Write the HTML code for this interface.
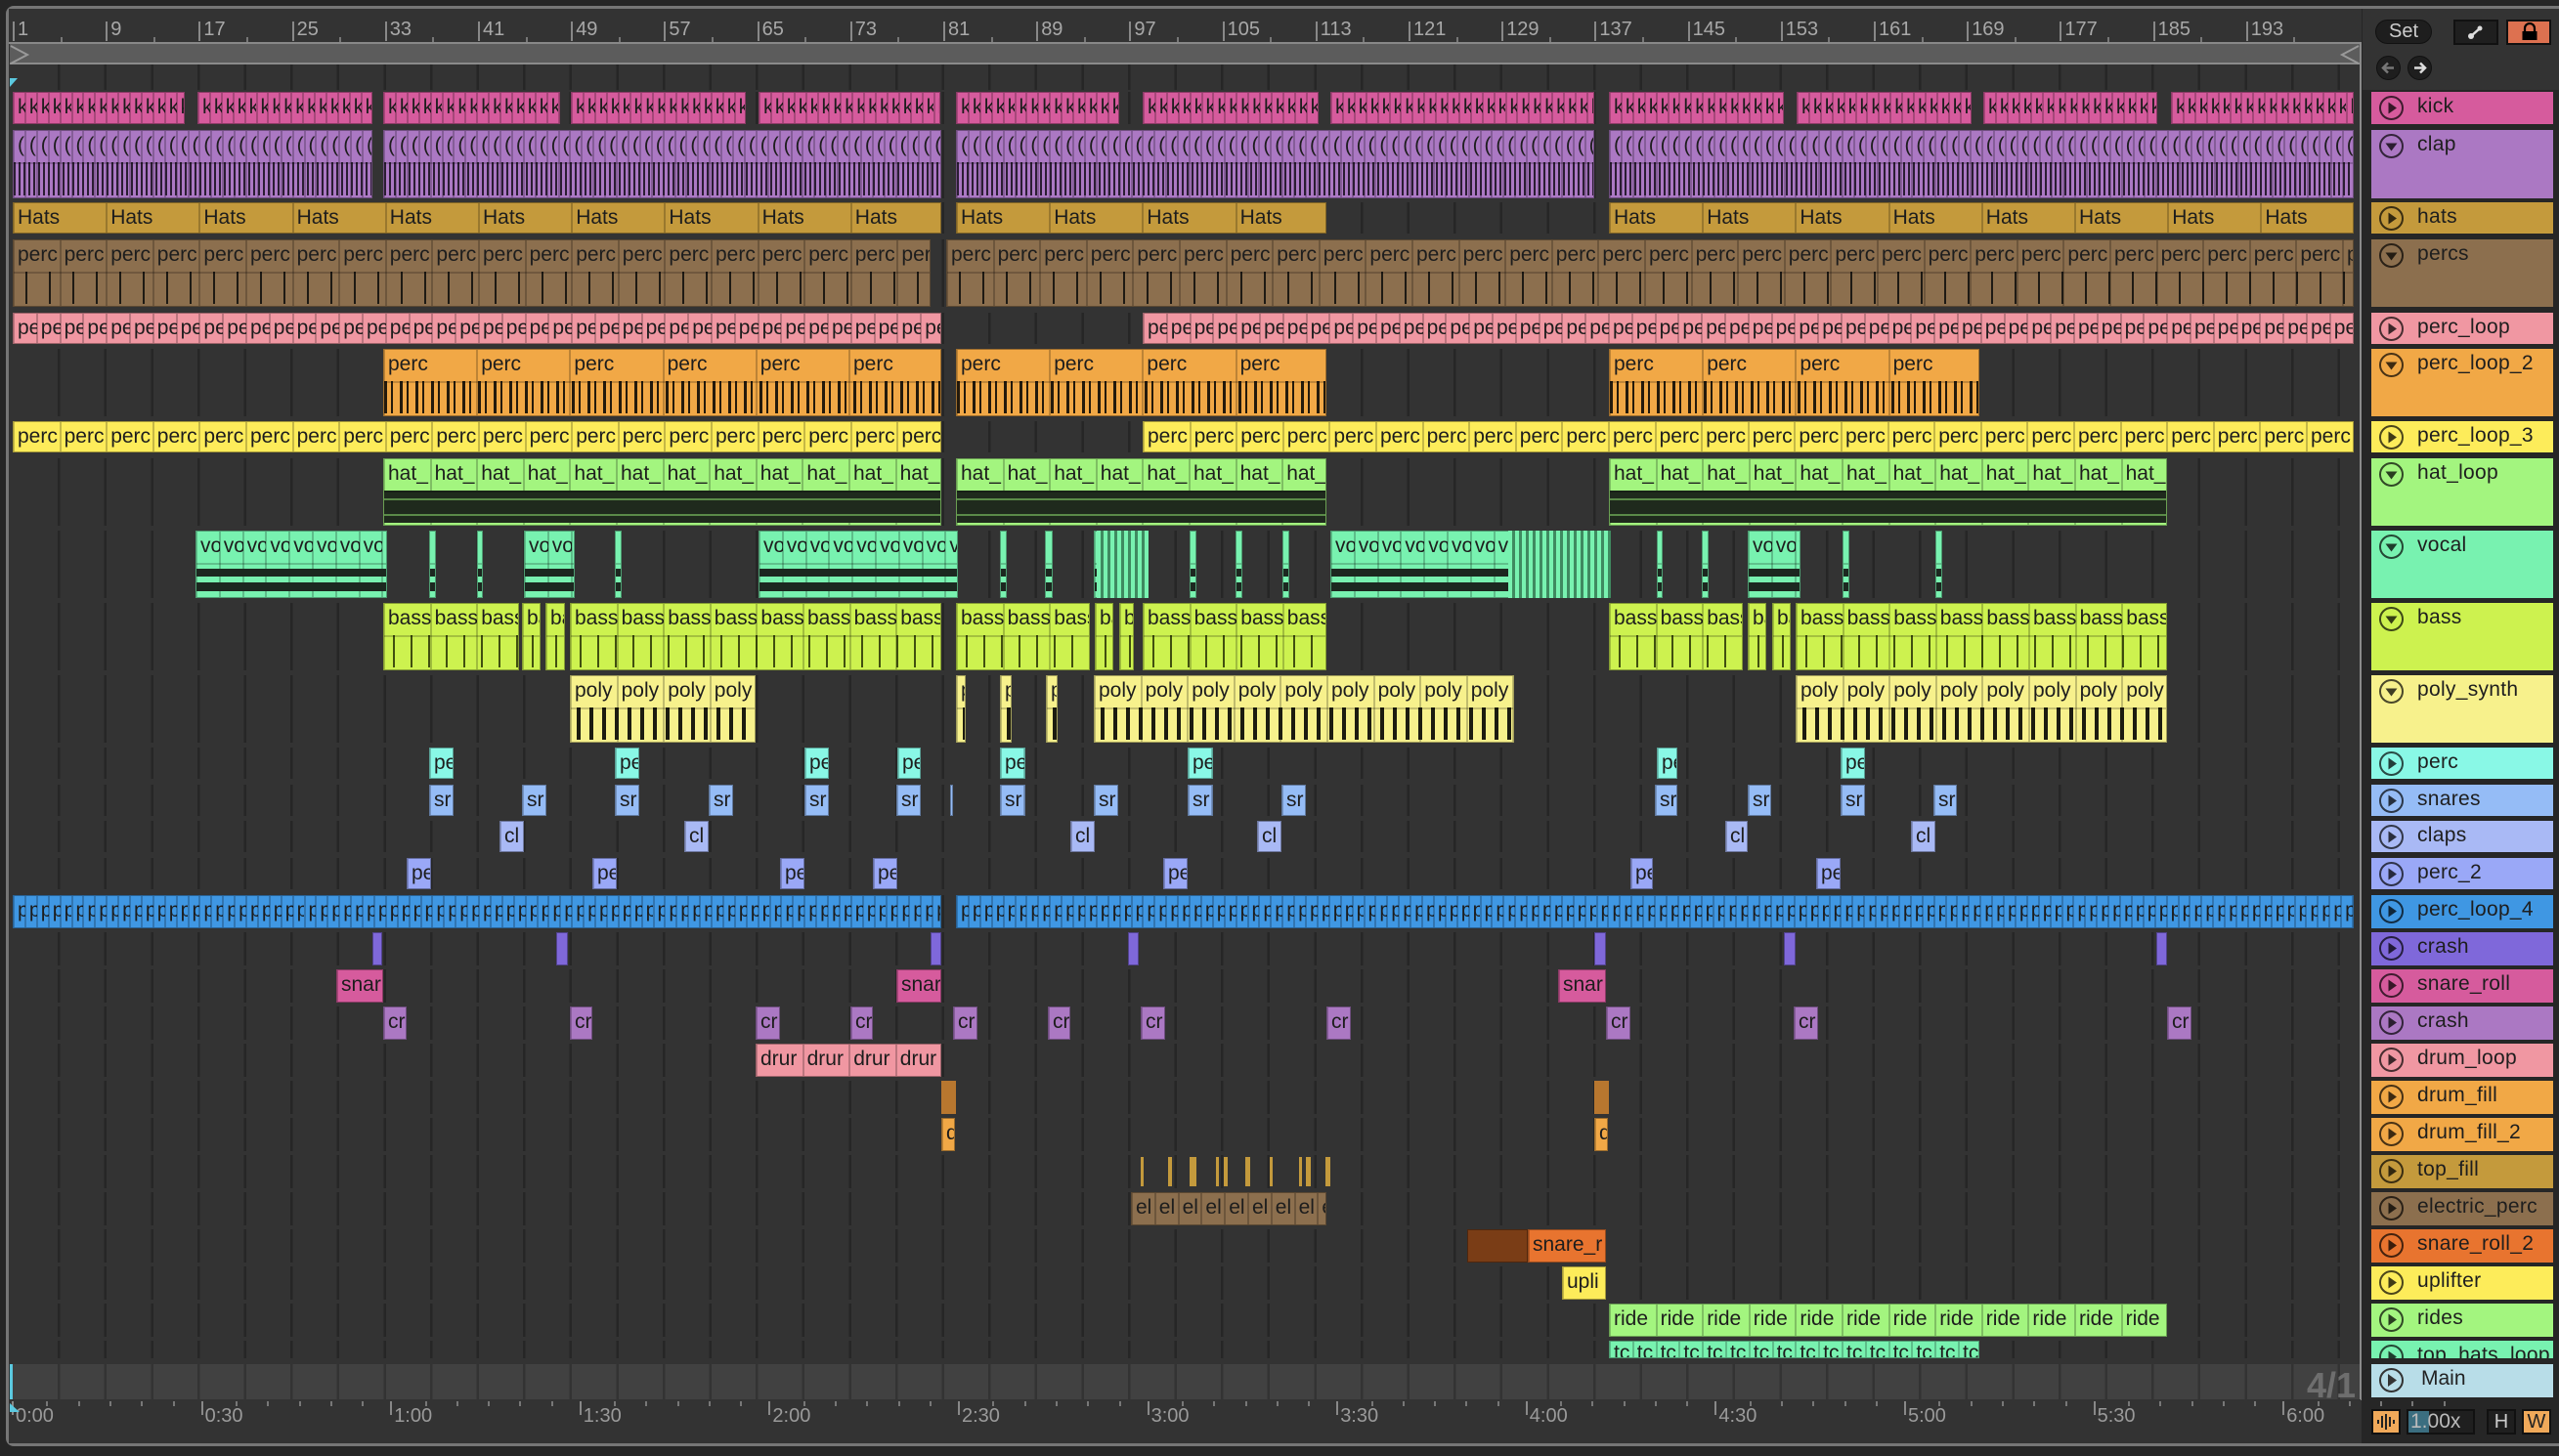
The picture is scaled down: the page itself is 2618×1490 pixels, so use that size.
<!DOCTYPE html>
<html><head><meta charset="utf-8">
<style>
*{box-sizing:border-box;margin:0;padding:0}
body{width:2618px;height:1490px;background:#262626;position:relative;overflow:hidden;font-family:"Liberation Sans",sans-serif}
.a{position:absolute}
.clip{position:absolute;overflow:hidden;border:1px solid rgba(0,0,0,.35)}
.u{position:absolute;top:0;bottom:0;border-left:2px solid rgba(0,0,0,.22);overflow:hidden;white-space:nowrap;font-size:21px;color:#1d1d1d;padding-left:3px;line-height:30px}
.hd{position:absolute;left:2426px;width:186px;overflow:hidden}
.hd .ic{position:absolute;left:8px;top:4px;width:25px;height:25px;border:2.5px solid rgba(0,0,0,.7);border-radius:50%}
.hd .nm{position:absolute;left:47px;top:3px;font-size:21px;color:#1e1e1e;letter-spacing:.3px}
.rn{position:absolute;top:19px;font-size:20px;color:#a8a8a8}
.tm{position:absolute;top:1438px;font-size:20px;color:#9a9a9a}
</style></head><body>
<div class="a" style="left:6px;top:6px;width:2410px;height:1474px;border:3px solid #767676;border-right:none;border-radius:8px 0 0 8px;background:#333"></div>
<div class="a" style="left:2416px;top:6px;width:202px;height:3px;background:#767676"></div>
<div class="a" style="left:2416px;top:1477px;width:202px;height:3px;background:#767676"></div>
<div class="a" style="left:9px;top:9px;width:2406px;height:34px;background:#333"></div>
<div class="a" style="left:9px;top:43px;width:2406px;height:2px;background:#888"></div>
<div class="a" style="left:10px;top:45px;width:2404px;height:21px;background:#5c5c5c;border-bottom:2px solid #8a8a8a"></div>
<svg class="a" style="left:10px;top:45px" width="22" height="22"><path d="M1 2 L18 11 L1 20" fill="none" stroke="#999" stroke-width="2"/></svg>
<svg class="a" style="left:2392px;top:45px" width="22" height="22"><path d="M21 2 L4 11 L21 20" fill="none" stroke="#999" stroke-width="2"/></svg>
<div class="a" style="left:2414px;top:43px;width:2px;height:1390px;background:#8a8a8a"></div>
<div id="ru"></div>
<div class="a" style="left:10px;top:66px;width:2404px;height:26px;background:#333" id="top0"></div>
<svg class="a" style="left:10px;top:80px" width="10" height="10"><path d="M0 0 L8 0 L0 9Z" fill="#5bc9e0"/></svg>
<div id="lanes"></div>
<div id="clips"></div>
<div id="heads"></div>
<div class="a" style="left:10px;top:1396px;width:2404px;height:36px;background:#414141" id="mainlane"></div>
<div class="a" style="left:2360px;top:1397px;font-size:36px;font-weight:bold;color:#6e6e6e">4/1</div>
<div class="a" style="left:10px;top:1396px;width:3px;height:36px;background:#5bc9e0"></div>
<div class="a" style="left:9px;top:1432px;width:2406px;height:45px;background:#333"></div>
<div id="bt"></div>
<svg class="a" style="left:10px;top:1436px" width="12" height="10"><path d="M0 0 L0 9 L10 9Z" fill="#5bc9e0"/></svg>
<div class="a" style="left:2417px;top:9px;width:201px;height:83px;background:#333"></div>
<div class="a" style="left:2430px;top:20px;width:58px;height:25px;border-radius:13px;background:#1e1e1e;border:1px solid #111;color:#ccc;font-size:20px;text-align:center;line-height:23px">Set</div>
<div class="a" style="left:2510px;top:20px;width:46px;height:26px;background:#1f1f1f;border:2px solid #111"></div>
<svg class="a" style="left:2522px;top:24px" width="22" height="18"><path d="M6 13 L15 5" stroke="#ddd" stroke-width="2.5"/><circle cx="6" cy="13" r="3" fill="#ddd"/><circle cx="15" cy="5" r="2.5" fill="#ddd"/></svg>
<div class="a" style="left:2564px;top:20px;width:46px;height:26px;background:#dd7150;border:2px solid #111"></div>
<svg class="a" style="left:2578px;top:23px" width="20" height="20"><path d="M5 9 V6 a5 5 0 0 1 10 0 V9" fill="none" stroke="#000" stroke-width="2.2"/><rect x="2.5" y="9" width="15" height="9" fill="#000"/></svg>
<div class="a" style="left:2431px;top:57px;width:25px;height:25px;border-radius:50%;background:#1e1e1e;border:1px solid #111"></div>
<svg class="a" style="left:2435px;top:61px" width="17" height="17"><path d="M3 8.5 H14 M8 3.5 L3 8.5 L8 13.5" fill="none" stroke="#777" stroke-width="2.5"/></svg>
<div class="a" style="left:2463px;top:57px;width:25px;height:25px;border-radius:50%;background:#1e1e1e;border:1px solid #111"></div>
<svg class="a" style="left:2467px;top:61px" width="17" height="17"><path d="M3 8.5 H14 M9 3.5 L14 8.5 L9 13.5" fill="none" stroke="#ddd" stroke-width="2.5"/></svg>
<div class="a" style="left:2426px;top:1442px;width:30px;height:26px;background:#f0a95a;border:2px solid #111"></div>
<svg class="a" style="left:2430px;top:1446px" width="22" height="18"><path d="M3 7v4M7 3v12M11 1v16M15 4v10M19 7v4" stroke="#222" stroke-width="2"/></svg>
<div class="a" style="left:2462px;top:1442px;width:70px;height:26px;background:#1f1f1f;border:2px solid #111"></div>
<div class="a" style="left:2464px;top:1444px;width:21px;height:22px;background:#3b6e80"></div>
<div class="a" style="left:2466px;top:1443px;font-size:21px;color:#bbb">1.00x</div>
<div class="a" style="left:2544px;top:1442px;width:30px;height:26px;background:#1f1f1f;border:2px solid #111;color:#ccc;font-size:20px;text-align:center;line-height:22px">H</div>
<div class="a" style="left:2580px;top:1442px;width:30px;height:26px;background:#f0a95a;border:2px solid #111;color:#222;font-size:20px;text-align:center;line-height:22px">W</div>
<div class="a" style="left:2426px;top:1396px;width:186px;height:34px;background:#b8dde8"></div>
<div class="a" style="left:2434px;top:1400px;width:25px;height:25px;border:2.5px solid #333;border-radius:50%"></div>
<svg class="a" style="left:2434px;top:1400px" width="25" height="25"><path d="M9 6 L18 12.5 L9 19Z" fill="#333"/></svg>
<div class="a" style="left:2477px;top:1399px;font-size:21px;color:#222">Main</div>

<script>
var S=1.6696;
function X(d){return Math.round(d*S);}
var BAR=11.9, X0=15;
function el(parent,html){document.getElementById(parent).insertAdjacentHTML('beforeend',html);}
for(var b=1;b<=193;b+=8){var x=X0+(b-1)*BAR;
 el('ru','<div class="a" style="left:'+(x-2)+'px;top:22px;width:2px;height:20px;background:#888"></div><div class="rn" style="left:'+(x+3)+'px">'+b+'</div>');
 el('ru','<div class="a" style="left:'+(x+4*BAR-1)+'px;top:38px;width:2px;height:5px;background:#777"></div>');}
var times=["0:00","0:30","1:00","1:30","2:00","2:30","3:00","3:30","4:00","4:30","5:00","5:30","6:00"];
for(var i=0;i<times.length;i++){var x=X0+i*193.6;
 el('bt','<div class="a" style="left:'+(x-3)+'px;top:1434px;width:2px;height:14px;background:#888"></div><div class="tm" style="left:'+(x+1)+'px">'+times[i]+'</div>');
 for(var k=1;k<6;k++){el('bt','<div class="a" style="left:'+(x+k*32.3)+'px;top:1434px;width:2px;height:5px;background:#777"></div>');}}
var grid='repeating-linear-gradient(90deg,transparent 0,transparent '+(4*BAR-2.5)+'px,#262626 '+(4*BAR-2.5)+'px,#262626 '+(4*BAR)+'px)';
document.getElementById('top0').style.backgroundImage=grid;
document.getElementById('top0').style.backgroundPosition=(X0-10-1)+'px 0';
document.getElementById('mainlane').style.backgroundImage=grid.replace(/#262626/g,'#333');
document.getElementById('mainlane').style.backgroundPosition=(X0-10-1)+'px 0';
var T=[
["kick",94,33,"#d65b9d",0,[[8,113],[121,228],[235,343],[350,457],[465,576],[586,686],[700,808],[815,977],[986,1093],[1101,1208],[1215,1322],[1330,1442]],1,"k","",1],
["clap",133,70,"#ab78c3",1,[[8,228],[235,577],[586,977],[986,1442]],1,"(","dense",0],
["hats",207,32,"#c49a3c",0,[[8,577],[586,813],[986,1442]],8,"Hats","",1],
["percs",245,69,"#8c6f4e",1,[[8,570],[580,1442]],4,"perc","ticks",0],
["perc_loop",320,32,"#f097a2",0,[[8,577],[700,1442]],2,"pe","",1],
["perc_loop_2",357,69,"#f1a846",1,[[235,577],[586,813],[986,1213]],8,"perc","spikes",0],
["perc_loop_3",431,32,"#fdec5a",0,[[8,577],[700,1442]],4,"perc","",1],
["hat_loop",469,69,"#a3f57f",1,[[235,577],[586,813],[986,1328]],4,"hat_","darkwave",0],
["vocal",543,69,"#78f2b0",1,[[120,237],[263,267],[292,296],[321,352],[377,381],[465,587],[613,617],[640,645],[670,704],[729,733],[757,761],[786,790],[815,987],[1015,1019],[1043,1047],[1071,1103],[1129,1133],[1186,1190]],2,"voc","blobs",0],
["bass",617,69,"#cdf24f",1,[[235,318],[320,331],[334,346],[349,577],[586,668],[671,682],[686,695],[700,813],[986,1068],[1071,1082],[1086,1097],[1100,1328]],4,"bass","dots",0],
["poly_synth",691,69,"#f7f18c",1,[[349,463],[586,592],[613,620],[641,648],[670,928],[1100,1328]],4,"poly","bars",0],
["perc",765,32,"#89f8e6",0,[[263,278],[377,392],[493,508],[550,564],[613,628],[728,743],[1015,1028],[1128,1143]],2,"pe","",1],
["snares",803,32,"#95bcf6",0,[[263,278],[320,335],[377,392],[434,449],[493,508],[549,564],[582,584],[613,628],[670,685],[728,743],[785,800],[1014,1028],[1071,1085],[1128,1143],[1185,1199]],2,"sr","",1],
["claps",840,32,"#a9b9f5",0,[[306,321],[419,434],[656,671],[770,785],[1057,1071],[1171,1186]],2,"cl","",1],
["perc_2",878,32,"#9aa8f7",0,[[249,264],[363,378],[478,493],[535,550],[713,728],[999,1013],[1113,1128]],2,"pe","",1],
["perc_loop_4",916,34,"#3f97e3",0,[[8,577],[586,1442]],1,"pe","",1],
["crash",954,34,"#7f68da",0,[[228,234],[341,348],[570,577],[691,698],[977,984],[1093,1100],[1321,1328]],2,"","",1],
["snare_roll",992,34,"#d65b9d",0,[[206,235],[549,577],[955,984]],4,"snar","",1],
["crash",1030,34,"#ab78c3",0,[[235,249],[349,363],[463,478],[521,535],[584,599],[642,656],[699,714],[813,828],[984,999],[1099,1114],[1328,1343]],2,"cr","",1],
["drum_loop",1068,34,"#f097a2",0,[[463,577]],4,"drur","",1],
["drum_fill",1106,34,"#f1a846",0,[[577,586],[977,986]],2,"","",1],
["drum_fill_2",1144,34,"#f1a846",0,[[577,585],[977,985]],2,"d","",1],
["top_fill",1182,34,"#c49a3c",0,[],2,"","",1],
["electric_perc",1220,34,"#8c6f4e",0,[[693,813]],2,"el","",1],
["snare_roll_2",1258,34,"#e8742f",0,[[936,984]],8,"snare_r","",1],
["uplifter",1296,34,"#fdec5a",0,[[957,984]],8,"upli","",1],
["rides",1334,34,"#a3f57f",0,[[986,1328]],4,"ride","",1],
["top_hats_loop",1372,18,"#78f2b0",0,[[986,1213]],2,"tc","",1]
];
var pat={
dense:'repeating-linear-gradient(90deg,#2b1d33 0 2px,transparent 2px 5px)',
ticks:'repeating-linear-gradient(90deg,transparent 0 12px,#1e1a14 12px 14px,transparent 14px 24px)',
spikes:'repeating-linear-gradient(90deg,#241a0c 0 3px,transparent 3px 7px,#241a0c 7px 9px,transparent 9px 16px)',
darkwave:'repeating-linear-gradient(180deg,#1f2a1d 0 6px,#5a8a48 6px 8px,#1f2a1d 8px 16px)',
blobs:'linear-gradient(180deg,transparent 0 4px,#1c2820 4px 12px,transparent 12px 18px,#1c2820 18px 27px,transparent 27px)',
dots:'repeating-linear-gradient(90deg,transparent 0 9px,rgba(30,40,0,.8) 9px 11px,transparent 11px 18px)',
bars:'repeating-linear-gradient(90deg,transparent 0 6px,#1c1c10 6px 10px,transparent 10px 13px)'
};
var hl='',cl='',ln='';
for(var t=0;t<T.length;t++){var r=T[t];var y=r[1],h=r[2],c=r[3];
 ln+='<div class="a" style="left:10px;top:'+y+'px;width:2404px;height:'+h+'px;background:#333;background-image:'+grid+';background-position:'+(X0-11)+'px 0"></div>';
 hl+='<div class="hd" style="top:'+y+'px;height:'+h+'px;background:'+c+'"><div class="ic"></div><svg class="a" style="left:8px;top:4px" width="25" height="25">'+(r[9]?'<path d="M9.5 6.5 L18 12.5 L9.5 18.5Z" fill="rgba(0,0,0,.75)"/>':'<path d="M6.5 9.5 L18.5 9.5 L12.5 17.5Z" fill="rgba(0,0,0,.75)"/>')+'</svg><div class="nm">'+r[0]+'</div></div>';
 var unit=r[6]*BAR;
 for(var s=0;s<r[5].length;s++){var x0=X(r[5][s][0]),x1=X(r[5][s][1]);var w=Math.max(x1-x0,3);
  var inner='';
  var n=Math.ceil(w/unit);
  if(r[7]&&w>8){for(var k=0;k<n;k++){inner+='<div class="u" style="left:'+(k*unit-1)+'px;width:'+(unit+1)+'px;'+(h<25?'line-height:24px;':'')+'">'+r[7]+'</div>';}}
  if(r[4]&&r[8]){inner+='<div class="a" style="left:0;right:0;top:32px;bottom:2px;border-top:2px solid rgba(0,0,0,.2);background-image:'+pat[r[8]]+'"></div>';}
  cl+='<div class="clip" style="left:'+x0+'px;top:'+y+'px;width:'+w+'px;height:'+h+'px;background:'+c+'">'+inner+'</div>';
 }
}
cl+='<div class="clip" style="left:'+X(899)+'px;top:1258px;width:'+(X(936)-X(899))+'px;height:34px;background:#7a3d16"></div>';
[[699,701],[716,718],[729,733],[745,747],[750,752],[763,766],[778,780],[796,798],[800,803],[812,815]].forEach(function(p){cl+='<div class="a" style="left:'+X(p[0])+'px;top:1184px;width:'+Math.max(X(p[1])-X(p[0]),3)+'px;height:30px;background:#c49a3c"></div>';});
cl+='<div class="a" style="left:'+X(577)+'px;top:1106px;width:'+(X(586)-X(577))+'px;height:34px;background:#b8772f"></div>';
cl+='<div class="a" style="left:'+X(977)+'px;top:1106px;width:'+(X(986)-X(977))+'px;height:34px;background:#b8772f"></div>';
cl+='<div class="a" style="left:'+X(924)+'px;top:543px;width:'+(X(987)-X(924))+'px;height:69px;background-image:repeating-linear-gradient(90deg,#78f2b0 0 4px,#3f8a60 4px 7px)"></div>';
cl+='<div class="a" style="left:'+X(672)+'px;top:543px;width:'+(X(704)-X(672))+'px;height:69px;background-image:repeating-linear-gradient(90deg,#78f2b0 0 4px,#3f8a60 4px 7px)"></div>';
el('lanes',ln);el('clips',cl);el('heads',hl);
</script>
</body></html>
